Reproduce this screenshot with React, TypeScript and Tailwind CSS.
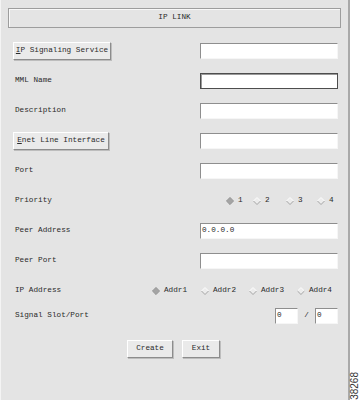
import React from "react";

const mono = { fontFamily: '"Liberation Mono", "DejaVu Sans Mono", monospace' };

const Field = ({ value = "", focus = false, w = "w-[138px]" }: { value?: string; focus?: boolean; w?: string }) => (
  <div
    className={`${w} h-[16px] bg-white flex items-center px-[1px] text-[7.7px] text-[#2a2a2a] ${
      focus
        ? "border border-[#4d4d4d] shadow-[inset_1px_1px_0_#9a9a9a]"
        : "border-t border-l border-t-[#8e8e8e] border-l-[#8e8e8e] border-b border-r border-b-[#f6f6f6] border-r-[#f6f6f6]"
    }`}
  >
    {value}
  </div>
);

const RaisedButton = ({ children, w }: { children: React.ReactNode; w: string }) => (
  <div
    className={`${w} h-[18px] flex items-center justify-center bg-[#eaeaea] border-t border-l border-t-white border-l-white border-b border-r border-b-[#8c8c8c] border-r-[#8c8c8c] shadow-[1px_1px_0_#bdbdbd] text-[7.7px] text-[#2a2a2a]`}
  >
    {children}
  </div>
);

const Diamond = ({ on }: { on?: boolean }) => (
  <svg width="8" height="8" viewBox="0 0 8 8">
    {on ? (
      <polygon points="4,0.3 7.7,4 4,7.7 0.3,4" fill="#a4a4a4" stroke="#8a8a8a" strokeWidth="0.6" />
    ) : (
      <>
        <polygon points="4,0.5 7.5,4 4,7.5 0.5,4" fill="#ececec" />
        <polyline points="0.5,4 4,0.5 7.5,4" fill="none" stroke="#ffffff" strokeWidth="0.9" />
        <polyline points="0.5,4 4,7.5 7.5,4" fill="none" stroke="#9c9c9c" strokeWidth="0.9" />
      </>
    )}
  </svg>
);

const Radio = ({ label, on, w }: { label: string; on?: boolean; w: string }) => (
  <div className={`${w} flex items-center gap-[4px] text-[7.7px] text-[#2a2a2a]`}>
    <Diamond on={on} />
    <span>{label}</span>
  </div>
);

const Row = ({ label, children, h = "h-[30px]" }: { label?: React.ReactNode; children?: React.ReactNode; h?: string }) => (
  <div className={`${h} flex items-center`}>
    <div className="flex-1 pl-[14px] text-[7.7px] text-[#2a2a2a]">{label}</div>
    {children}
  </div>
);

export default function App() {
  return (
    <div className="w-[360px] h-[400px] flex bg-white" style={mono}>
      <div className="w-[350px] h-[400px] bg-[#e4e4e4] border-l border-l-[#f4f4f4] border-r-2 border-r-[#a9a9a9] flex flex-col">
        <div className="mx-[7px] mt-[8px] h-[20px] border border-[#9d9d9d] shadow-[inset_1px_1px_0_#f8f8f8] flex items-center justify-center text-[7.7px] text-[#2a2a2a]">
          IP LINK
        </div>

        <div className="flex flex-col mt-[8px] pr-[10px]">
          <div className="h-[30px] flex items-center">
            <div className="flex-1 pl-[12px]">
              <RaisedButton w="w-[98px]">
                <span>
                  <span className="underline">I</span>P Signaling Service
                </span>
              </RaisedButton>
            </div>
            <Field />
          </div>
          <Row label="MML Name">
            <Field focus />
          </Row>
          <Row label="Description">
            <Field />
          </Row>
          <div className="h-[30px] flex items-center">
            <div className="flex-1 pl-[12px]">
              <RaisedButton w="w-[96px]">
                <span>
                  <span className="underline">E</span>net Line Interface
                </span>
              </RaisedButton>
            </div>
            <Field />
          </div>
          <Row label="Port">
            <Field />
          </Row>
          <Row label="Priority">
            <div className="flex items-center pr-[4px]">
              <Radio label="1" on w="w-[27px]" />
              <Radio label="2" w="w-[33px]" />
              <Radio label="3" w="w-[31px]" />
              <Radio label="4" w="w-[17px]" />
            </div>
          </Row>
          <Row label="Peer Address">
            <Field value="0.0.0.0" />
          </Row>
          <Row label="Peer Port">
            <Field />
          </Row>
          <Row label="IP Address">
            <div className="flex items-center pr-[6px]">
              <Radio label="Addr1" on w="w-[49px]" />
              <Radio label="Addr2" w="w-[48px]" />
              <Radio label="Addr3" w="w-[48px]" />
              <Radio label="Addr4" w="w-[35px]" />
            </div>
          </Row>
          <Row label="Signal Slot/Port" h="h-[20px]">
            <div className="flex items-center">
              <Field value="0" w="w-[23px]" />
              <span className="w-[17px] text-center text-[7.7px] text-[#2a2a2a]">/</span>
              <Field value="0" w="w-[23px]" />
            </div>
          </Row>
        </div>

        <div className="flex justify-center gap-[9px] mt-[14px] pr-[2px]">
          <RaisedButton w="w-[46px]">Create</RaisedButton>
          <RaisedButton w="w-[38px]">Exit</RaisedButton>
        </div>
      </div>

      <div className="flex-1 flex items-end justify-center">
        <span
          className="[writing-mode:vertical-rl] rotate-180 text-[10px] text-[#333] leading-none"
          style={{ fontFamily: '"Liberation Sans", Arial, sans-serif' }}
        >
          38268
        </span>
      </div>
    </div>
  );
}
